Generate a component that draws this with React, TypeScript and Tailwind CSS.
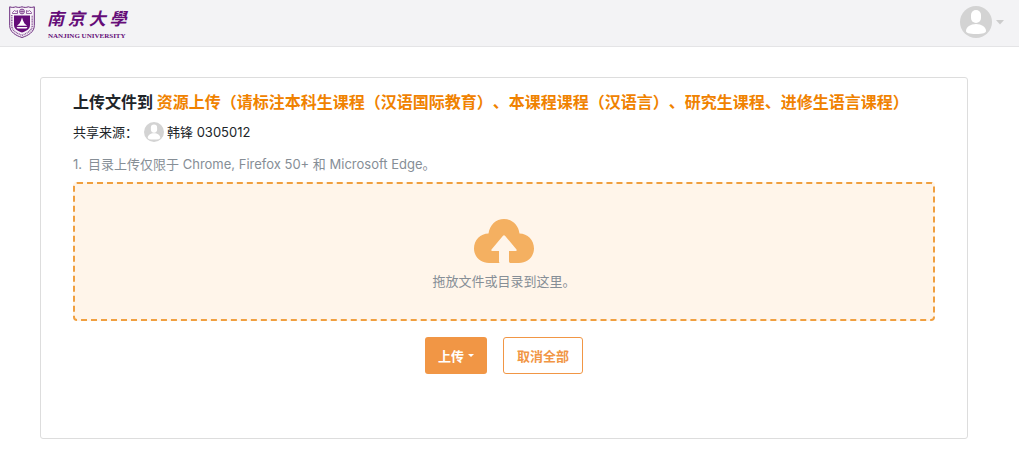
import { useId } from "react";

function Avatar({ className }: { className: string }) {
  const clip = useId();

  return (
    <svg viewBox="0 0 32 32" className={className} aria-hidden="true">
      <clipPath id={clip}>
        <circle cx="16" cy="16" r="16" />
      </clipPath>
      <g clipPath={`url(#${clip})`}>
        <rect width="32" height="32" fill="#d3d3d3" />
        <rect x="11" y="4" width="10" height="13" rx="5" fill="#fff" />
        <path d="M6 25c0-4 4.500-7 10-7s10 3 10 7c0 2-3 3-10 3s-10-1-10-3z" fill="#fff" />
      </g>
    </svg>
  );
}

function Crest() {
  return (
    <svg viewBox="0 0 26 32" className="h-8 w-[26px]" fill="none" aria-hidden="true">
      <path
        d="M.7.8c2 .8 4 .8 6 0 2 .8 4 .8 6.300 0 2.300.8 4.300.8 6.300 0 2 .8 4 .8 6 0v18.700c0 6.500-6 10-12.300 12C6.700 29.500.7 26 .7 19.500z"
        fill="#f7f2f8"
        stroke="#6a2a7d"
      />
      <path d="M2.800 9v10.500c0 5 4.500 7.700 10.200 9.700 5.700-2 10.200-4.700 10.200-9.700V9" stroke="#8d5a9b" strokeWidth="1.500" strokeDasharray="1 .7" />
      <path d="M5 9.500h16V19c0 4-3.500 6-8 7.500C8.500 25 5 23 5 19z" fill="#650c78" />
      <path d="M13 11.500l1 3 1.500 3 2.500 2.200H8l2.500-2.200 1.500-3zM7.500 21h11l-1 1.500h-9z" fill="#fff" />
      <circle cx="13" cy="5.500" r="2.400" stroke="#7b3c8c" />
      <path d="M11 5.500h4M13 3.500v4M3.500 6.500l2-2 1.500 1 1.500-1v3h-5zM17.500 4.500l1.500 1 1.500-1 2 2v1h-5z" stroke="#7b3c8c" strokeWidth=".8" />
    </svg>
  );
}

function CloudUpload() {
  return (
    <svg viewBox="0 0 60 44" className="h-11 w-[60px]" aria-hidden="true">
      <path
        d="M26 44H15C6.500 44 0 37.500 0 29.500 0 21 6.500 14.500 14.500 14.500 15.500 6 22 0 30 0s14.500 6 15.500 14.500C53.500 14.500 60 21 60 29.500 60 37.500 53.500 44 45 44H37c-1.500 0-2-.5-2-2V32h6.500c1.300 0 1.500-.8.8-1.700L31.200 17c-.8-1-1.600-1-2.400 0L17.700 30.300c-.7.9-.5 1.700.8 1.700H25v10c0 1 0 2 1 2z"
        fill="#f4b061"
      />
    </svg>
  );
}

export default function App() {
  return (
    <div className="bg-white font-['Inter','Noto_Sans_CJK_SC',sans-serif] text-[13px] leading-5 text-[#212529] [text-spacing-trim:space-all]">
      <header className="flex h-[47px] items-center justify-between border-b border-[#e4e4e6] bg-[#f3f3f5] pr-[15px] pb-0.5 pl-[9px]">
        <a href="#" className="flex items-center gap-3 text-[#650c78]">
          <Crest />
          <span className="flex flex-col items-center">
            <span className="font-['Noto_Sans_CJK_SC',sans-serif] text-[17px] leading-7 font-bold whitespace-nowrap italic">
              南 京 大 學
            </span>
            <span className="font-['Liberation_Serif',serif] text-[7px] leading-2 font-bold whitespace-nowrap">
              NANJING UNIVERSITY
            </span>
          </span>
        </a>
        <button type="button" aria-label="账户" className="flex items-center gap-1">
          <Avatar className="size-8" />
          <svg viewBox="0 0 8 5" className="h-[5px] w-2" aria-hidden="true">
            <path d="M0 0h8L4 4.500z" fill="#ccc" />
          </svg>
        </button>
      </header>

      <main className="pt-[30px] pr-[51px] pb-[34px] pl-10">
        <section className="min-h-[362px] rounded-[3px] border border-[#ddd] px-8 pt-3">
          <h1 className="text-[16px] leading-6 font-bold">
            上传文件到{" "}
            <span className="text-[#f08200]">
              资源上传（请标注本科生课程（汉语国际教育）、本课程课程（汉语言）、研究生课程、进修生语言课程）
            </span>
          </h1>
          <p className="mt-2 flex items-center">
            <span>共享来源：</span>
            <Avatar className="mr-[3px] ml-1.5 size-5" />
            <span>韩锋 0305012</span>
          </p>
          <p className="mt-3 flex gap-1.5 text-[#868e96]">
            <span>1.</span>
            <span>目录上传仅限于 Chrome, Firefox 50+ 和 Microsoft Edge。</span>
          </p>

          <div className="mt-2 flex h-[139px] flex-col items-center gap-2 rounded-[4px] border-2 border-dashed border-[#f09f3f] bg-[#fff5ea] pt-[35px] text-[#868e96]">
            <CloudUpload />
            <p>拖放文件或目录到这里。</p>
          </div>

          <div className="mt-4 flex justify-center gap-4 font-bold">
            <button
              type="button"
              className="flex h-[37px] items-center gap-1 rounded-[3px] bg-[#f19645] px-[13px] text-white"
            >
              上传
              <svg viewBox="0 0 6 3" className="h-[3px] w-1.5" aria-hidden="true">
                <path d="M0 0h6L3 3z" fill="currentColor" />
              </svg>
            </button>
            <button
              type="button"
              className="h-[37px] rounded-[3px] border border-[#f19645] bg-white px-[13px] text-[#f19645]"
            >
              取消全部
            </button>
          </div>
        </section>
      </main>
    </div>
  );
}
